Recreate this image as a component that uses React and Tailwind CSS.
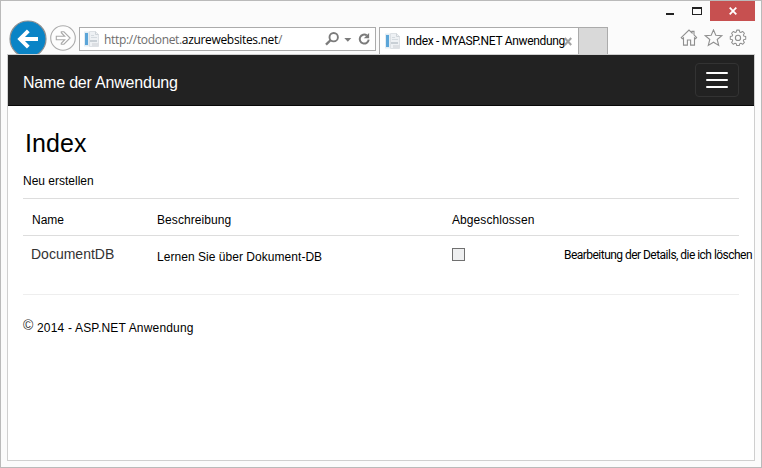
import React from "react";

const FONT = "font-['Liberation_Sans',Arial,sans-serif]";

function PageIcon() {
  return (
    <svg width="16" height="16" viewBox="0 0 16 16" className="shrink-0">
      <rect x="0" y="0.5" width="5" height="15" fill="#e3edf4" />
      <rect x="1" y="2" width="3" height="12" fill="#5ba5d8" />
      <path d="M5.5 0.5h6l3 3v12h-9z" fill="#eef1f4" stroke="#dde1e5" />
      <path d="M11.5 0.5v3h3" fill="none" stroke="#cfd4d9" />
      <path d="M7 4.5h3M7 6.5h6" stroke="#d5dbe0" />
      <rect x="6" y="9" width="7" height="2" fill="#c8cfd5" />
      <rect x="8" y="12" width="7" height="3" fill="#dcdfe3" />
    </svg>
  );
}

function BackButton() {
  return (
    <svg width="38" height="34" viewBox="0 0 38 34" className="shrink-0">
      <circle cx="19" cy="19" r="18" fill="#0a84c6" stroke="#8d8f91" strokeWidth="1.2" />
      <path d="M29 19H11.5M19.3 10.8l-8.2 8.2 8.2 8.2" fill="none" stroke="#fff" strokeWidth="3.9" />
    </svg>
  );
}

function ForwardButton() {
  return (
    <svg width="26" height="26" viewBox="0 0 26 26" className="shrink-0">
      <circle cx="13" cy="13" r="12.3" fill="#fdfdfd" stroke="#acacac" strokeWidth="1.1" />
      <path
        d="M6.3 11.3h8.4l-3.4-3.6V6.8h2.6l6.2 6.2-6.2 6.2h-2.6v-0.9l3.4-3.6H6.3z"
        fill="#fff"
        stroke="#a9a9a9"
        strokeWidth="1.1"
      />
    </svg>
  );
}

function AddressBar() {
  return (
    <div className="flex h-6 w-[297px] shrink-0 items-center border border-[#ababab] bg-white pl-1">
      <PageIcon />
      <div className="ml-[4px] mt-[1px] w-[221px] whitespace-nowrap font-['Open_Sans','Noto_Sans',sans-serif] text-[12px] leading-[16px] tracking-[-0.33px] text-[#6d6d6d]">
        http://todonet.<span className="text-black">azurewebsites.net</span>/
      </div>
      <svg width="46" height="16" viewBox="0 0 46 16" className="shrink-0">
        <circle cx="8.7" cy="6.2" r="4.2" fill="none" stroke="#7b7b7b" strokeWidth="1.9" />
        <path d="M5.7 9L1 13.6" stroke="#7b7b7b" strokeWidth="2.4" />
        <path d="M19.3 7h7l-3.5 3.7z" fill="#7b7b7b" />
        <path d="M41.8 4.4A4.5 4.5 0 1 0 43.7 8.7" fill="none" stroke="#7b7b7b" strokeWidth="2" />
        <path d="M44.1 1.9v5.3h-5.3z" fill="#7b7b7b" />
      </svg>
    </div>
  );
}

function Tabs() {
  return (
    <div className="ml-[3px] flex h-[27px] shrink-0">
      <div className="flex w-[200px] items-center border border-b-0 border-[#ababab] bg-white pl-[5px]">
        <PageIcon />
        <div className="ml-[5px] w-[158px] whitespace-nowrap font-['Roboto','Liberation_Sans',sans-serif] text-[12px] leading-[16px] tracking-[-0.32px] text-black">
          Index - MYASP.NET Anwendung
        </div>
        <svg width="8" height="9" viewBox="0 0 8 9" className="shrink-0">
          <path d="M0.8 1l6.4 7M7.2 1l-6.4 7" stroke="#a3a3a3" strokeWidth="2" />
        </svg>
      </div>
      <div className="w-[29px] border border-b-0 border-l-0 border-[#ababab] bg-[#d9d9d9]" />
    </div>
  );
}

function WindowButtons() {
  return (
    <div className="flex h-5 items-start">
      <svg width="44" height="20" viewBox="0 0 44 20">
        <rect x="0" y="12" width="8" height="2" fill="#222" />
        <path d="M26 6h10v8H26zM27 8v5h8V8z" fill="#222" fillRule="evenodd" />
      </svg>
      <div className="flex h-5 w-[45px] items-center justify-center bg-[#c75050]">
        <svg width="8" height="8" viewBox="0 0 8 8">
          <path d="M0.7 0.7l6.6 6.6M7.3 0.7L0.7 7.3" stroke="#fff" strokeWidth="1.8" />
        </svg>
      </div>
    </div>
  );
}

function ToolIcons() {
  return (
    <svg width="68" height="18" viewBox="0 0 68 18" fill="none" stroke="#8f8f8f" strokeWidth="1.1">
      <path d="M1.2 8.6L9 1.1l3 2.9V2.4h2v3.5l2.6 2.7-1 1.2-1.1-.9v7.2h-3.9V11H7.4v5.1H3.5V8.9l-1.2.9z" />
      <path d="M33.5 0.9l2.3 5.3 6 .5-4.6 3.8 1.5 5.9-5.2-3.2-5.2 3.2 1.5-5.9-4.6-3.8 6-.5z" />
      <path
        strokeLinejoin="round"
        d="M56.6 1h2.8l.5 2.1 1.2.5 1.9-1.2 2 2-1.2 1.9.5 1.2 2.1.5v2.8l-2.1.5-.5 1.2 1.2 1.9-2 2-1.9-1.2-1.2.5-.5 2.1h-2.8l-.5-2.1-1.2-.5-1.9 1.2-2-2 1.2-1.9-.5-1.2-2.1-.5V8l2.1-.5.5-1.2-1.2-1.9 2-2 1.9 1.2 1.2-.5z"
        transform="translate(4.64 0.2) scale(0.92)"
      />
      <circle cx="58" cy="8.9" r="2.6" />
    </svg>
  );
}

function BrowserChrome() {
  return (
    <div className="flex h-[53px] shrink-0 justify-between pl-2">
      <div className="flex items-end">
        <BackButton />
        <div className="ml-[3px] h-[29px]">
          <ForwardButton />
        </div>
        <div className="ml-[3px] h-[27px]">
          <AddressBar />
        </div>
        <Tabs />
      </div>
      <div className="flex flex-col items-start pr-[6px]">
        <WindowButtons />
        <div className="ml-[14px] mt-[8px]">
          <ToolIcons />
        </div>
      </div>
    </div>
  );
}

function Navbar() {
  return (
    <div className="flex h-[51px] items-center justify-between border-b border-[#080808] bg-[#222] pl-[15px] pr-[15px]">
      <div className="mt-[6px] whitespace-nowrap text-[16px] leading-5 tracking-[-0.2px] text-white">
        Name der Anwendung
      </div>
      <div className="flex h-[34px] w-11 flex-col items-center justify-center gap-[5px] rounded-[4px] border border-[#333]">
        <div className="h-[2px] w-[22px] rounded-[1px] bg-white" />
        <div className="h-[2px] w-[22px] rounded-[1px] bg-white" />
        <div className="h-[2px] w-[22px] rounded-[1px] bg-white" />
      </div>
    </div>
  );
}

function TodoTable() {
  return (
    <div className="mt-[10px] text-[12px] leading-[14px]">
      <div className="grid h-[37px] grid-cols-[134px_295px_112px_1fr] border-t border-[#ddd] pt-[14px]">
        <div className="pl-[9px]">Name</div>
        <div className="tracking-[0.08px]">Beschreibung</div>
        <div className="tracking-[0.08px]">Abgeschlossen</div>
      </div>
      <div className="grid h-[59px] grid-cols-[134px_295px_112px_1fr] border-t border-[#ddd] whitespace-nowrap">
        <div className="pl-2 pt-[10px] text-[14px] leading-4 text-[#333]">DocumentDB</div>
        <div className="pt-[14px] tracking-[0.04px]">Lernen Sie über Dokument-DB</div>
        <div className="pt-[12px]">
          <div className="h-[13px] w-[13px] border border-[#707070] bg-[#eeeff0]" />
        </div>
        <div className="pt-[12px] font-['Roboto','Liberation_Sans',sans-serif] tracking-[-0.53px]">
          Bearbeitung der Details, die ich löschen
        </div>
      </div>
    </div>
  );
}

export default function App() {
  return (
    <div className={`flex h-[468px] w-[762px] flex-col overflow-hidden border border-[#bababa] bg-[#fbfbfb] text-black ${FONT}`}>
      <BrowserChrome />
      <div className="mx-[6px] h-[407px] border border-[#cfcfcf] bg-white">
        <Navbar />
        <div className="px-[15px] pt-[22px]">
          <h1 className="pl-[2px] text-[25px] leading-[30px] tracking-[0.1px]">Index</h1>
          <div className="mt-[16px] text-[12px] leading-[14px]">Neu erstellen</div>
          <TodoTable />
          <div className="flex border-t border-[#eee] pt-[22px] text-[12px]">
            <div className="w-[14px] text-[14px] leading-4 text-[#333]">©</div>
            <div className="mt-[3px] leading-[16px] tracking-[0.18px]">2014 - ASP.NET Anwendung</div>
          </div>
        </div>
      </div>
    </div>
  );
}
